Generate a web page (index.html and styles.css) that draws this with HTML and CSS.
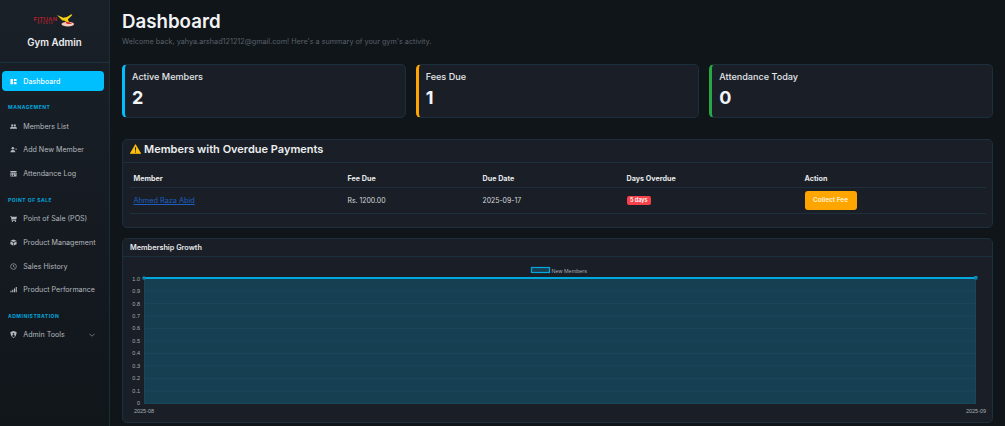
FILE: index.html
```html
<!DOCTYPE html>
<html lang="en">
<head>
<meta charset="utf-8">
<title>Dashboard</title>
<link rel="stylesheet" href="styles.css">
</head>
<body>
<div class="app">
  <aside class="sidebar">
    <div class="brand">
      <div class="logo">
        <div class="logo-words"><span class="logo-main">FITUAN</span><span class="logo-sub">STUDIO</span></div>
        <svg class="logo-mark" viewBox="0 0 20 14" width="18" height="13">
          <ellipse cx="12" cy="11" rx="7" ry="2.6" fill="#f6c9c0"/>
          <path d="M0 1l7 3 4-1 5-3 1 1-5 5 2 4-2 0-4-3-2 0z" fill="#f5d312"/>
          <path d="M9 8l5 1 3 2-6 0z" fill="#d9362b"/>
        </svg>
      </div>
      <div class="brand-name">Gym Admin</div>
    </div>
    <nav class="nav">
      <a class="nav-item active"><svg class="ico" viewBox="0 0 16 16"><path d="M1 2h6v12H1zM9 2h6v5H9zM9 9h6v5H9z"/></svg>Dashboard</a>
      <div class="nav-label">MANAGEMENT</div>
      <a class="nav-item"><svg class="ico" viewBox="0 0 16 16"><circle cx="5" cy="5.500" r="2.500"/><circle cx="11" cy="5.500" r="2.500"/><path d="M0 13c0-3 2-4.500 5-4.500 1.500 0 2.400.4 3 1 .6-.6 1.500-1 3-1 3 0 5 1.500 5 4.500z"/></svg>Members List</a>
      <a class="nav-item"><svg class="ico" viewBox="0 0 16 16"><circle cx="6.500" cy="5" r="3"/><path d="M1 14c0-3.500 2-5 5.500-5s5.500 1.500 5.500 5zM12 6.500h4V8h-4z"/></svg>Add New Member</a>
      <a class="nav-item"><svg class="ico" viewBox="0 0 16 16"><path d="M1 2h14v3H1zM1 6h14v9H1z"/><path d="M3 8h2v2H3zM7 8h2v2H7zM11 8h2v2h-2zM3 11.500h2v2H3zM7 11.500h2v2H7z" fill="#171c23"/></svg>Attendance Log</a>
      <div class="nav-label">POINT OF SALE</div>
      <a class="nav-item"><svg class="ico" viewBox="0 0 16 16"><path d="M0 2h3l.5 2H16l-2 6H5l.3 1.500H14V13H4L2 3.500H0z"/><circle cx="5.500" cy="14.500" r="1.500"/><circle cx="12.500" cy="14.500" r="1.500"/></svg>Point of Sale (POS)</a>
      <a class="nav-item"><svg class="ico" viewBox="0 0 16 16"><path d="M8 1l7 3-7 3-7-3zM1 5.500l6.300 2.800V15L1 12zM15 5.500L8.700 8.300V15L15 12z"/></svg>Product Management</a>
      <a class="nav-item"><svg class="ico" viewBox="0 0 16 16"><circle cx="8" cy="8" r="6.500" fill="none" stroke="currentColor" stroke-width="1.400"/><path d="M8 4v4.300l3 1.700" fill="none" stroke="currentColor" stroke-width="1.400"/></svg>Sales History</a>
      <a class="nav-item"><svg class="ico" viewBox="0 0 16 16"><path d="M1 11h2.500v3H1zM5 8.500h2.500V14H5zM9 5.500h2.500V14H9zM13 2h2.500v12H13z"/></svg>Product Performance</a>
      <div class="nav-label">ADMINISTRATION</div>
      <a class="nav-item"><svg class="ico" viewBox="0 0 16 16"><path d="M8 0l7 2.500C15 9 13 13.500 8 16 3 13.500 1 9 1 2.500z"/><circle cx="8" cy="6.500" r="2" fill="#12171d"/><path d="M4.500 12c.5-2 2-2.700 3.500-2.700s3 .7 3.500 2.700L8 14z" fill="#12171d"/></svg><span class="grow">Admin Tools</span><svg class="chev" viewBox="0 0 12 8"><path d="M1 1.500l5 5 5-5" fill="none" stroke="currentColor" stroke-width="1.300"/></svg></a>
    </nav>
  </aside>
  <main class="main">
    <header class="page-head">
      <h1>Dashboard</h1>
      <p>Welcome back, yahya.arshad121212@gmail.com! Here's a summary of your gym's activity.</p>
    </header>
    <section class="stats">
      <div class="stat blue"><h3>Active Members</h3><div class="num">2</div></div>
      <div class="stat amber"><h3>Fees Due</h3><div class="num">1</div></div>
      <div class="stat green"><h3>Attendance Today</h3><div class="num">0</div></div>
    </section>
    <section class="card overdue">
      <div class="card-head big">
        <svg class="warn" viewBox="0 0 16 14"><path d="M8 .5l7.700 13.200H.3z" fill="#ffc107" stroke="#ffc107" stroke-linejoin="round"/><path d="M7.200 4.500h1.600l-.2 5H7.400zM7.200 10.500h1.600v1.600H7.200z" fill="#1a1f27"/></svg>
        Members with Overdue Payments
      </div>
      <div class="card-body">
        <table class="table">
          <thead><tr><th>Member</th><th>Fee Due</th><th>Due Date</th><th>Days Overdue</th><th>Action</th></tr></thead>
          <tbody><tr>
            <td><a class="member-link">Ahmed Raza Abid</a></td>
            <td>Rs. 1200.00</td>
            <td>2025-09-17</td>
            <td><span class="badge">5 days</span></td>
            <td><a class="btn">Collect Fee</a></td>
          </tr></tbody>
        </table>
      </div>
    </section>
    <section class="card growth">
      <div class="card-head">Membership Growth</div>
      <svg class="chart" viewBox="0 0 871 165" width="871" height="165">
        <rect x="408.500" y="9.500" width="18" height="5" fill="#173f52" stroke="#00a8e0" stroke-width="1.200"/>
        <text x="428.500" y="14.500" class="tick">New Members</text>
        <rect x="21" y="20" width="832" height="126" fill="#173f52"/>
        <g stroke="#1a4659" stroke-width="1">
          <path d="M21 33h832M21 45.500h832M21 58h832M21 70.500h832M21 83h832M21 95.500h832M21 108h832M21 120.500h832M21 133h832M21 145.500h832M21.500 20v126M852.500 20v126"/>
        </g>
        <path d="M21 20h832" stroke="#00a8e0" stroke-width="2"/>
        <circle cx="21" cy="20" r="1.800" fill="#0f86b0"/>
        <rect x="851" y="18" width="3.500" height="3.500" fill="#0f86b0"/>
        <g class="tick" text-anchor="end">
          <text x="17" y="22.500">1.0</text><text x="17" y="34.500">0.9</text><text x="17" y="47.500">0.8</text><text x="17" y="59.500">0.7</text><text x="17" y="72">0.6</text><text x="17" y="84.500">0.5</text><text x="17" y="97">0.4</text><text x="17" y="109.500">0.3</text><text x="17" y="122">0.2</text><text x="17" y="134.500">0.1</text><text x="17" y="147">0</text>
        </g>
        <text x="21" y="155" class="tick" text-anchor="middle">2025-08</text>
        <text x="853" y="155" class="tick" text-anchor="middle">2025-09</text>
      </svg>
    </section>
  </main>
</div>
</body>
</html>
```
FILE: styles.css
```css
* { box-sizing: border-box; }
html, body { margin: 0; height: 100%; overflow: hidden; }
body {
  background: #10151a;
  color: #e6e8ea;
  font-family: "Inter", "Liberation Sans", sans-serif;
}
.app { display: flex; height: 426px; }

.sidebar {
  flex: 0 0 110px;
  background: linear-gradient(180deg, #1a2028 0%, #11161b 100%);
  border-right: 1px solid #1d2d38;
}
.brand {
  height: 63px;
  border-bottom: 1px solid #1b3240;
  padding-top: 13px;
  text-align: center;
}
.logo { display: flex; justify-content: center; align-items: center; gap: 0; height: 14px; margin-bottom: 9px; }
.logo-words { display: flex; flex-direction: column; align-items: center; line-height: 1; }
.logo-main { color: #b3202b; font: 700 6px/6px "Liberation Sans", sans-serif; letter-spacing: 0.3px; }
.logo-sub { color: #a82530; font: 700 3px/3px "Liberation Sans", sans-serif; letter-spacing: 0.9px; }
.logo-mark { display: block; }
.brand-name { font-size: 9.700px; font-weight: 600; line-height: 14px; color: #eceef0; }

.nav { padding: 8px 5px 0 2px; }
.nav-item {
  display: flex;
  align-items: center;
  height: 20px;
  margin-bottom: 3.800px;
  padding-left: 8px;
  border-radius: 4px;
  font-size: 7.100px;
  color: #b4b9bf;
}
.nav-item.active { background: #00bfff; color: #f4fbff; font-weight: 500; }
.ico { width: 7px; height: 7px; margin-right: 6.300px; fill: currentColor; flex: none; }
.grow { flex: 1; }
.chev { width: 6px; height: 4px; margin-right: 9px; color: #9aa0a6; }
.nav-label {
  height: 12px;
  margin: 10px 0 3px 6px;
  font-size: 5px;
  line-height: 12px;
  font-weight: 700;
  letter-spacing: 0.500px;
  color: #00a6de;
}

.main { flex: 1; padding: 0 12px 0 12px; min-width: 0; }
.page-head { height: 64px; padding-top: 10px; }
.page-head h1 { margin: 0; font-size: 18.700px; line-height: 24px; font-weight: 600; color: #f1f3f5; }
.page-head p { margin: 2px 0 0; font-size: 7.250px; line-height: 12px; color: #596068; }

.stats { display: grid; grid-template-columns: repeat(3, 1fr); gap: 10px; }
.stat {
  height: 54px;
  padding: 6px 7px;
  background: #1a1f27;
  border: 1px solid #1b2f3c;
  border-left-width: 3px;
  border-radius: 5px;
}
.stat.blue { border-left-color: #00bfff; }
.stat.amber { border-left-color: #ffa500; }
.stat.green { border-left-color: #28a745; }
.stat h3 { margin: 0; font-size: 9.100px; line-height: 12px; font-weight: 500; color: #e3e5e8; }
.stat .num { margin-top: 4px; font-size: 18px; line-height: 22px; font-weight: 700; color: #f2f4f6; }

.card {
  background: #1a1f27;
  border: 1px solid #1b2f3c;
  border-radius: 5px;
}
.overdue { margin-top: 21px; height: 89px; }
.growth { margin-top: 10px; height: 185px; }
.card-head {
  display: flex;
  align-items: center;
  height: 18px;
  padding-left: 7px;
  border-bottom: 1px solid #1b2f3c;
  font-size: 7.300px;
  font-weight: 600;
  color: #e6e8ea;
}
.card-head.big { height: 23px; padding-bottom: 4px; font-size: 11px; gap: 3px; color: #eceef0; }
.warn { width: 11px; height: 10px; flex: none; }
.card-body { padding: 7px 7px 0; }
.chart { display: block; margin-top: 1px; }
.table { width: 856px; border-collapse: collapse; table-layout: fixed; }
.table th {
  height: 17px;
  padding: 0 3.500px;
  text-align: left;
  font-size: 7.200px;
  font-weight: 700;
  color: #e6e8ea;
  border-bottom: 1px solid #1b2f3c;
}
.table td {
  height: 26px;
  padding: 0 3.500px;
  font-size: 6.900px;
  color: #d5d8dc;
  border-bottom: 1px solid #1b2f3c;
}
.table th:nth-child(1) { width: 214px; }
.table th:nth-child(2) { width: 135px; }
.table th:nth-child(3) { width: 144px; }
.table th:nth-child(4) { width: 178px; }
.table th:nth-child(5) { width: 185px; }
.member-link { color: #1c5fc0; text-decoration: underline; font-size: 7.300px; }
.badge {
  display: inline-block;
  padding: 0 3.500px;
  height: 9px;
  line-height: 9px;
  background: #f4414a;
  border-radius: 2px;
  color: #fff;
  font-size: 5.500px;
  font-weight: 600;
}
.btn {
  display: inline-block;
  width: 52px;
  height: 19px;
  line-height: 19px;
  text-align: center;
  background: #ffa500;
  border-radius: 3px;
  color: #fff3d6;
  font-size: 6.500px;
  font-weight: 600;
}
.tick { font: 5.500px "Liberation Sans", sans-serif; fill: #a8adb2; }
```
